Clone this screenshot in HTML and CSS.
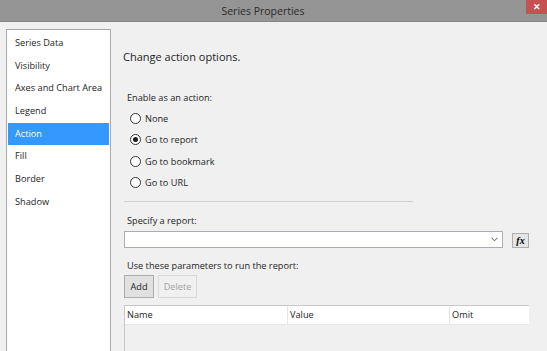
FILE: index.html
```html
<!DOCTYPE html>
<html>
<head>
    <meta charset="utf-8" />
    <title>Series Properties</title>
<link rel="stylesheet" href="styles.css">
</head>
<body>
<div class="window">
    <!-- title bar -->
    <div class="titlebar">
        <span class="title">Series Properties</span>
        <span class="close">&#x2715;</span>
    </div>

    <div class="main">
        <!-- page list -->
        <ul class="nav">
            <li>Series Data</li>
            <li>Visibility</li>
            <li>Axes and Chart Area</li>
            <li>Legend</li>
            <li class="selected">Action</li>
            <li>Fill</li>
            <li>Border</li>
            <li>Shadow</li>
        </ul>

        <!-- action page -->
        <div class="page">
            <p class="heading">Change action options.</p>

            <p class="label first">Enable as an action:</p>
            <div class="radios">
                <label class="radio"><span class="dot"></span>None</label>
                <label class="radio on"><span class="dot"></span>Go to report</label>
                <label class="radio"><span class="dot"></span>Go to bookmark</label>
                <label class="radio"><span class="dot"></span>Go to URL</label>
            </div>

            <div class="rule"></div>

            <p class="label spec">Specify a report:</p>
            <div class="combo-row">
                <div class="combo">
                    <svg class="chevron" width="7" height="5" viewBox="0 0 7 5">
                        <path d="M0.5 0.8 L3.5 3.8 L6.5 0.8" fill="none" stroke="#555" stroke-width="1"/>
                    </svg>
                </div>
                <button class="fx"><i>fx</i></button>
            </div>

            <p class="label params">Use these parameters to run the report:</p>
            <div class="buttons">
                <button class="btn">Add</button>
                <button class="btn disabled">Delete</button>
            </div>

            <div class="grid">
                <div class="grid-head">
                    <span class="col name">Name</span>
                    <span class="col value">Value</span>
                    <span class="col omit">Omit</span>
                </div>
            </div>
        </div>
    </div>
</div>
</body>
</html>
```

FILE: styles.css
```css
body {
    margin: 0;
    font-family: "Open Sans", "Noto Sans", sans-serif;
    font-size: 9.2px;
    color: #1e1e1e;
    background: #f0f0f0;
}

.window {
    width: 547px;
    height: 351px;
    overflow: hidden;
    background: #f0f0f0;
}

/* title bar */
.titlebar {
    position: relative;
    height: 21px;
    padding-right: 21px;
    background: #959595;
    border-bottom: 1px solid #858585;
    display: flex;
    justify-content: center;
    align-items: center;
}

.title {
    font-size: 10.5px;
    color: #2b2b2b;
}

.close {
    position: absolute;
    top: 0;
    right: 0;
    width: 21px;
    height: 14px;
    background: #c75050;
    color: #fff;
    font-size: 9px;
    font-weight: bold;
    line-height: 14px;
    text-align: center;
}

.main {
    display: flex;
    padding: 7px 0 0 6px;
}

/* left list */
.nav {
    list-style: none;
    margin: 0;
    padding: 2px 1px 0 1px;
    width: 101px;
    height: 330px;
    background: #fff;
    border: 1px solid #a9a9a9;
    border-bottom: none;
}

.nav li {
    height: 22.7px;
    line-height: 22.7px;
    padding-left: 7px;
}

.nav li.selected {
    background: #3399ff;
    color: #fff;
}

/* right page */
.page {
    flex: 1;
    display: flex;
    flex-direction: column;
    padding-left: 12px;
}

.page p {
    margin: 0;
}

.heading {
    margin-top: 19px !important;
    font-size: 11px;
    line-height: 18px;
}

.label {
    line-height: 16px;
    padding-left: 4px;
}

.label.first { margin-top: 24px !important; }
.label.spec { margin-top: 11px !important; }
.label.params { margin-top: 10px !important; }

.radios {
    display: flex;
    flex-direction: column;
    margin-top: 2px;
    padding-left: 7px;
}

.radio {
    display: flex;
    align-items: center;
    height: 21.3px;
}

.dot {
    width: 9px;
    height: 9px;
    margin-right: 4px;
    border: 1px solid #333;
    border-radius: 50%;
    background: #fff;
    display: flex;
    align-items: center;
    justify-content: center;
}

.radio.on .dot:after {
    content: "";
    width: 5px;
    height: 5px;
    border-radius: 50%;
    background: #1e1e1e;
}

.rule {
    margin-top: 8px;
    margin-left: 1px;
    width: 289px;
    height: 1px;
    background: #d0d0d0;
}

.combo-row {
    display: flex;
    align-items: flex-start;
    margin-top: 2px;
    margin-left: 1px;
}

.combo {
    width: 377px;
    height: 15px;
    background: #fff;
    border: 1px solid #abadb3;
    display: flex;
    align-items: center;
    justify-content: flex-end;
}

.chevron {
    margin-right: 4px;
}

.fx {
    margin: 2px 0 0 9px;
    padding: 0;
    width: 17px;
    height: 15px;
    border: 1px solid #adadad;
    background: #e4e4e4;
    font-family: "Liberation Serif", serif;
    font-size: 10px;
    font-weight: bold;
    line-height: 12px;
    color: #000;
}

.buttons {
    display: flex;
    gap: 4px;
    margin-top: 1px;
    margin-left: 1px;
}

.btn {
    height: 23px;
    width: 30px;
    padding: 0;
    font-family: "Open Sans", "Noto Sans", sans-serif;
    font-size: 9.2px;
    color: #1e1e1e;
    background: #e1e1e1;
    border: 1px solid #adadad;
}

.btn.disabled {
    color: #a3a3a3;
    background: #f0f0f0;
    border-color: #d9d9d9;
    width: 39px;
}

.grid {
    margin-top: 7px;
    margin-left: 1px;
    width: 404px;
    height: 60px;
    border: 1px solid #c8c8c8;
    border-bottom: none;
    border-right: none;
    background: #f0f0f0;
}

.grid-head {
    display: flex;
    height: 18px;
    background: #fff;
    border-bottom: 1px solid #e8e8e8;
}

.col {
    line-height: 18px;
    padding-left: 2px;
    border-right: 1px solid #e6e6e6;
}

.col.name { width: 160px; }
.col.value { width: 159px; }
.col.omit { flex: 1; border-right: none; }
```
